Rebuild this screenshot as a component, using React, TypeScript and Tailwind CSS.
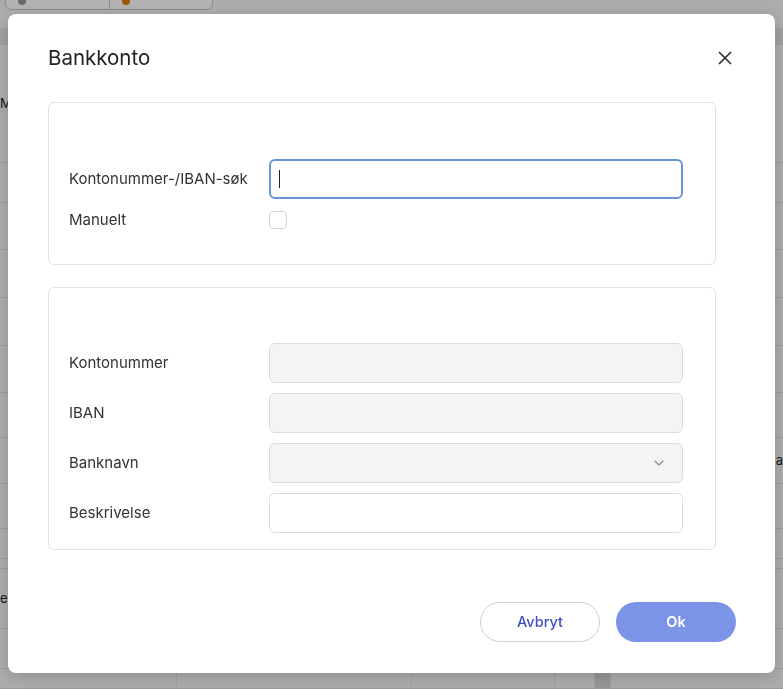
import { X, ChevronDown } from "lucide-react";

const font = { fontFamily: "Inter, 'Noto Sans', sans-serif" };

function Field({
  label,
  children,
}: {
  label: string;
  children: React.ReactNode;
}) {
  return (
    <div className="flex items-center">
      <div className="w-[200px] shrink-0 text-[15px] text-[#333]">{label}</div>
      <div className="flex-1">{children}</div>
    </div>
  );
}

function DisabledInput() {
  return <div className="h-10 rounded-md border border-[#dcdcdc] bg-[#f3f4f6]" />;
}

// Dimmed page behind the modal
function BackgroundPage() {
  const rows = [118, 40, 47, 48, 48, 47, 45, 46, 45, 30, 10, 60, 40, 20];
  return (
    <div className="flex h-[689px] flex-col overflow-hidden bg-[#f7f7f7]">
      <div className="-mt-[22px] flex px-[5px]">
        <div className="flex h-8 w-[208px] rounded-md border border-[#c8c8c8] bg-white">
          <div className="flex w-[103px] items-end px-3 pb-1">
            <span className="h-2 w-2 rounded-full bg-[#999]" />
          </div>
          <div className="flex flex-1 items-end border-l border-[#c8c8c8] px-3 pb-1">
            <span className="h-2 w-2 rounded-full bg-[#e07b00]" />
          </div>
        </div>
      </div>
      <div className="mt-[18px] h-[17px] bg-[#e6e6e6]" />
      <div className="flex flex-col">
        {rows.map((h, i) => (
          <div
            key={i}
            className="flex border-b border-[#dedede] text-[13px] text-[#222]"
            style={{ height: h }}
          >
            <div className="flex w-[177px] items-center border-r border-[#e5e5e5]">
              {i === 0 ? "M" : i === 11 ? "el" : ""}
            </div>
            <div className="w-[235px] border-r border-[#e5e5e5]" />
            <div className="w-[143px] border-r border-[#e5e5e5]" />
            <div className="w-[40px] border-r border-[#e5e5e5]" />
            <div className="w-[15px] bg-[#d8d8d8]" />
            <div className="flex flex-1 items-center justify-end border-l border-[#e5e5e5]">
              {i === 7 ? "a" : ""}
            </div>
          </div>
        ))}
      </div>
    </div>
  );
}

export default function App() {
  return (
    <div className="relative h-[689px] w-full overflow-hidden" style={font}>
      <BackgroundPage />

      {/* Overlay */}
      <div className="fixed inset-0 flex justify-center bg-black/30 pt-[14px]">
        <div className="flex h-fit w-[767px] flex-col rounded-lg bg-white shadow-[0_4px_16px_rgba(0,0,0,0.18)]">
          {/* Header */}
          <div className="flex items-center justify-between pl-10 pr-[39px] pt-[30px]">
            <h2 className="text-[20.5px] leading-7 text-[#222]">Bankkonto</h2>
            <X className="h-[22px] w-[22px] text-[#333]" strokeWidth={1.9} />
          </div>

          {/* Search section */}
          <div className="ml-10 mt-[30px] w-[668px] rounded-md border border-[#e2e2e2] pb-[34px] pl-5 pr-8 pt-[56px]">
            <Field label="Kontonummer-/IBAN-søk">
              <div className="flex h-10 items-center rounded-md border-2 border-[#6b95d8] px-2">
                <span className="h-[18px] w-px bg-[#222]" />
              </div>
            </Field>
            <div className="mt-[11px] flex h-5 items-center">
              <div className="w-[200px] shrink-0 text-[15px] text-[#333]">Manuelt</div>
              <div className="h-[18px] w-[18px] rounded-[4px] border border-[#d6d6d6] bg-white" />
            </div>
          </div>

          {/* Account details section */}
          <div className="ml-10 mt-[22px] flex w-[668px] flex-col gap-[10px] rounded-md border border-[#e2e2e2] pb-4 pl-5 pr-8 pt-[55px]">
            <Field label="Kontonummer">
              <DisabledInput />
            </Field>
            <Field label="IBAN">
              <DisabledInput />
            </Field>
            <Field label="Banknavn">
              <div className="flex h-10 items-center justify-end rounded-md border border-[#dcdcdc] bg-[#f3f4f6] pr-[15px]">
                <ChevronDown className="h-4 w-4 text-[#888]" strokeWidth={1.75} />
              </div>
            </Field>
            <Field label="Beskrivelse">
              <div className="h-10 rounded-md border border-[#dcdcdc] bg-white" />
            </Field>
          </div>

          {/* Footer */}
          <div className="flex justify-end gap-4 pb-[31px] pl-10 pr-[39px] pt-[52px]">
            <button className="h-10 w-[120px] rounded-full border border-[#cfcfcf] bg-white text-[14.5px] font-medium text-[#3c4fc2]">
              Avbryt
            </button>
            <button className="h-10 w-[120px] rounded-full bg-[#7c94e7] text-[14.5px] font-semibold text-white">
              Ok
            </button>
          </div>
        </div>
      </div>
    </div>
  );
}
